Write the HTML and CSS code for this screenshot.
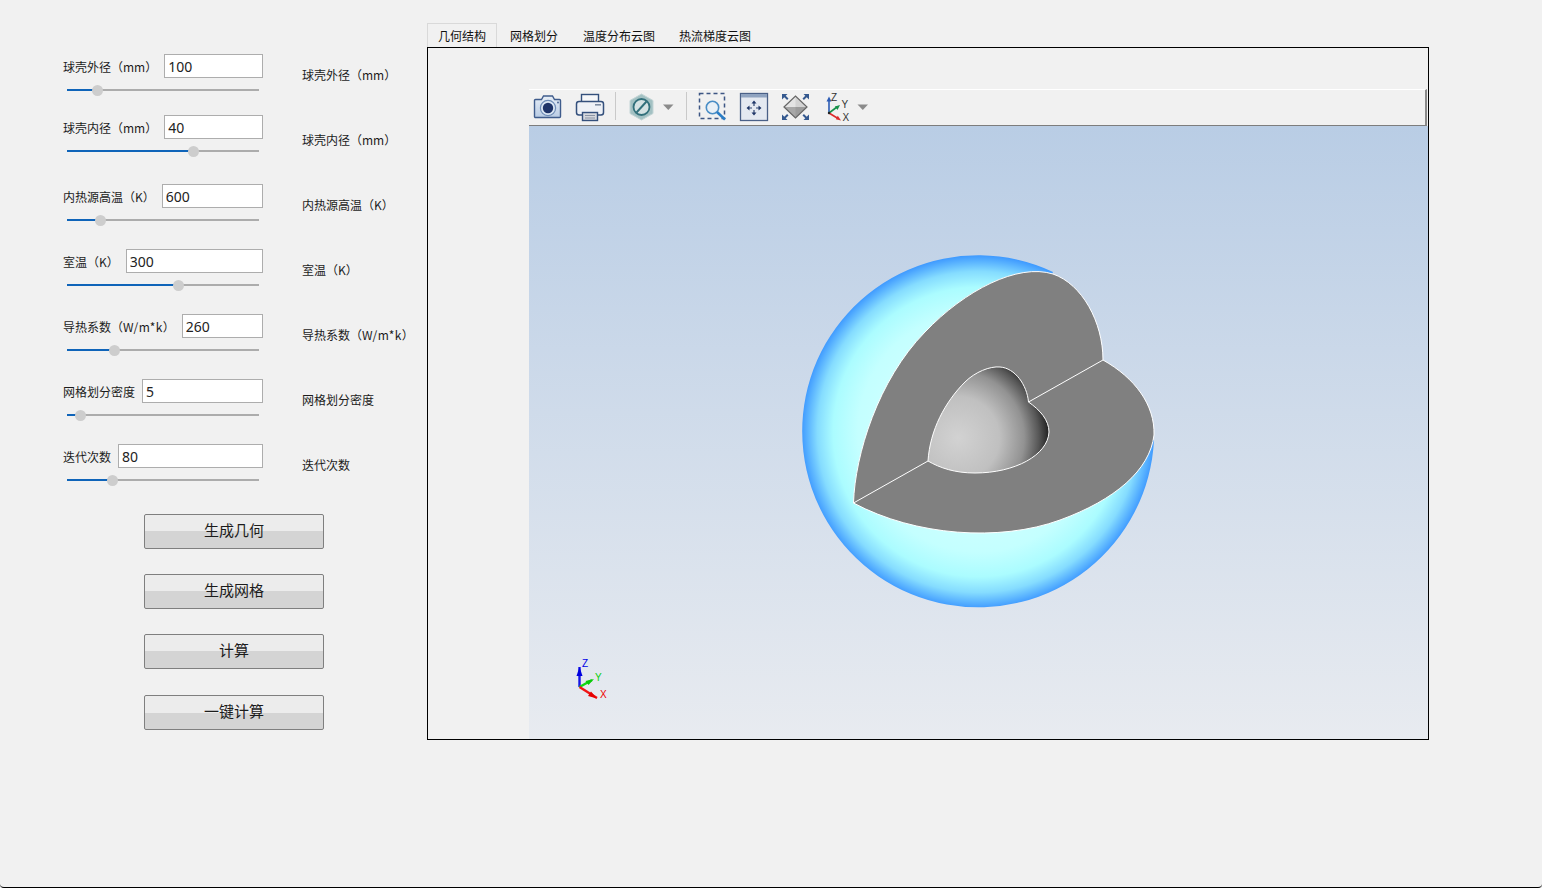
FILE: index.html
```html
<!DOCTYPE html>
<html lang="zh-CN">
<head>
<meta charset="utf-8">
<title>球壳传热计算</title>
<link rel="stylesheet" href="styles.css">
</head>
<body>
<div class="window">
  <aside class="sidebar">
    <div class="params">
      <div class="fields">
        <div class="field field-tight">
          <div class="field-row"><label class="field-label">球壳外径（mm）</label><input class="field-input" value="100"></div>
          <div class="slider"><span class="slider-fill" style="width:30px"></span><span class="slider-thumb"></span><span class="slider-rest"></span></div>
        </div>
        <div class="field field-loose">
          <div class="field-row"><label class="field-label">球壳内径（mm）</label><input class="field-input" value="40"></div>
          <div class="slider"><span class="slider-fill" style="width:126px"></span><span class="slider-thumb"></span><span class="slider-rest"></span></div>
        </div>
        <div class="field">
          <div class="field-row"><label class="field-label">内热源高温（K）</label><input class="field-input" value="600"></div>
          <div class="slider"><span class="slider-fill" style="width:33px"></span><span class="slider-thumb"></span><span class="slider-rest"></span></div>
        </div>
        <div class="field">
          <div class="field-row"><label class="field-label">室温（K）</label><input class="field-input" value="300"></div>
          <div class="slider"><span class="slider-fill" style="width:111px"></span><span class="slider-thumb"></span><span class="slider-rest"></span></div>
        </div>
        <div class="field">
          <div class="field-row"><label class="field-label">导热系数（<span class="unit-wide">W/m*k</span>）</label><input class="field-input" value="260"></div>
          <div class="slider"><span class="slider-fill" style="width:47px"></span><span class="slider-thumb"></span><span class="slider-rest"></span></div>
        </div>
        <div class="field">
          <div class="field-row"><label class="field-label">网格划分密度</label><input class="field-input" value="5"></div>
          <div class="slider"><span class="slider-fill" style="width:13px"></span><span class="slider-thumb"></span><span class="slider-rest"></span></div>
        </div>
        <div class="field">
          <div class="field-row"><label class="field-label">迭代次数</label><input class="field-input" value="80"></div>
          <div class="slider"><span class="slider-fill" style="width:45px"></span><span class="slider-thumb"></span><span class="slider-rest"></span></div>
        </div>
      </div>
      <div class="readouts">
        <div class="readout">球壳外径（mm）</div>
        <div class="readout">球壳内径（mm）</div>
        <div class="readout">内热源高温（K）</div>
        <div class="readout">室温（K）</div>
        <div class="readout">导热系数（<span class="unit-wide">W/m*k</span>）</div>
        <div class="readout">网格划分密度</div>
        <div class="readout">迭代次数</div>
      </div>
    </div>
    <div class="actions">
      <button class="action">生成几何</button>
      <button class="action">生成网格</button>
      <button class="action">计算</button>
      <button class="action action-last">一键计算</button>
    </div>
  </aside>

  <main class="workspace">
    <div class="tabs">
      <div class="tab tab-active">几何结构</div>
      <div class="tab tab-spaced">网格划分</div>
      <div class="tab">温度分布云图</div>
      <div class="tab">热流梯度云图</div>
    </div>
    <div class="frame">
      <div class="viewer">
        <div class="toolbar">
          <svg class="tool tool-first" width="30" height="30" viewBox="0 0 30 30">
            <defs><linearGradient id="camBody" x1="0" y1="0" x2="0" y2="1"><stop offset="0" stop-color="#e6edf6"/><stop offset="1" stop-color="#b9cce4"/></linearGradient></defs>
            <path d="M2.500 7.500h6l2-3.500h9l2 3.500h5a1 1 0 0 1 1 1v16a1 1 0 0 1-1 1h-24a1 1 0 0 1-1-1v-16a1 1 0 0 1 1-1z" fill="url(#camBody)" stroke="#3f5c8c" stroke-width="1.400"/>
            <circle cx="15" cy="16" r="7.600" fill="#dce7f3" stroke="#6f8db6" stroke-width="1.200"/>
            <circle cx="15" cy="16" r="5.200" fill="#1f3468"/>
            <circle cx="25" cy="10.500" r="0.900" fill="#3f5c8c"/>
          </svg>
          <svg class="tool" width="30" height="30" viewBox="0 0 30 30">
            <rect x="6.500" y="2.500" width="17" height="8" fill="#f6f7f9" stroke="#34507c" stroke-width="1.400"/>
            <rect x="1.500" y="9.500" width="27" height="13.500" rx="2.500" fill="#eef1f6" stroke="#34507c" stroke-width="1.500"/>
            <rect x="20" y="12" width="6" height="1.600" fill="#7f8da3"/>
            <rect x="7.500" y="20.500" width="15" height="8" fill="#d5d8dd" stroke="#34507c" stroke-width="1.400"/>
            <path d="M10 23.500h10M10 26h10" stroke="#8a94a5" stroke-width="1"/>
          </svg>
          <span class="tool-sep"></span>
          <svg class="tool-wide" width="30" height="30" viewBox="0 0 30 30">
            <path d="M15.500 2 L27 8.500 V21.500 L15.500 28 L4 21.500 V8.500 Z" fill="#a3c1c3" stroke="#c3d5d6" stroke-width="1"/>
            <circle cx="15.500" cy="15" r="8" fill="#d4e2e3" stroke="#32707b" stroke-width="1.800"/>
            <path d="M10.500 20.500 L20.500 9.500" stroke="#32707b" stroke-width="1.900"/>
          </svg>
          <svg class="tool-caret" width="12" height="30" viewBox="0 0 12 30"><path d="M1 12.500h10.500l-5.200 5.500z" fill="#8b8b8b"/></svg>
          <span class="tool-sep"></span>
          <svg class="tool-wide" width="30" height="30" viewBox="0 0 30 30">
            <rect x="2.500" y="1.500" width="25" height="25" fill="none" stroke="#3d5684" stroke-width="1.500" stroke-dasharray="4 3"/>
            <circle cx="15.500" cy="15.500" r="6.200" fill="#e9f0f7" stroke="#4a8ec6" stroke-width="1.600"/>
            <path d="M20 20 L28 27.500" stroke="#2a7dc6" stroke-width="2.600"/>
          </svg>
          <svg class="tool" width="30" height="30" viewBox="0 0 30 30">
            <rect x="1.500" y="1.500" width="27" height="27" fill="#e4e9f1" stroke="#4a6087" stroke-width="1.300"/>
            <rect x="2" y="2" width="26" height="3.500" fill="#8fa3c0"/>
            <path d="M15 11v3M15 18v3M10 16h3M17 16h3" stroke="#2d4470" stroke-width="1.200"/>
            <path d="M15 8.500l-2.500 3h5zM15 23.500l-2.500-3h5zM7.500 16l3-2.500v5zM22.500 16l-3-2.500v5z" fill="#1f3668"/>
          </svg>
          <svg class="tool" width="30" height="30" viewBox="0 0 30 30">
            <path d="M3 15 L14.500 4 L26 15 Z" fill="#e4e4e4"/>
            <path d="M3 15 L14.500 26 L26 15 Z" fill="#a8a8a8"/>
            <path d="M14.500 4 V26 L26 15 Z" fill="#000" fill-opacity=".07"/>
            <path d="M3 15 L14.500 4 L26 15 L14.500 26 Z" fill="none" stroke="#666" stroke-width="1.200"/>
            <path d="M1 2h5.500l-1.800 1.800 2.800 2.800-1.400 1.400-2.800-2.800L1 7.500zM28 2h-5.500l1.800 1.800-2.800 2.800 1.400 1.400 2.800-2.800L28 7.500zM1 28h5.500l-1.800-1.800 2.800-2.800-1.400-1.400-2.800 2.800L1 22.500zM28 28h-5.500l1.800-1.800-2.800-2.800 1.400-1.400 2.800 2.800L28 22.500z" fill="#35598f"/>
          </svg>
          <svg class="tool" width="30" height="30" viewBox="0 0 30 30">
            <path d="M6 21 V8" stroke="#2c5cb5" stroke-width="1.600"/><path d="M6 4.500 L3.500 9.500 H8.500 Z" fill="#2c5cb5"/>
            <path d="M6 21 L14 15" stroke="#17914a" stroke-width="1.600"/><path d="M17 13 L11.800 14.500 L14.500 18 Z" fill="#17914a"/>
            <path d="M6 21 L15 26.500" stroke="#dd2b2b" stroke-width="1.600"/><path d="M18 28.500 L14.800 23.800 L12.800 27.200 Z" fill="#dd2b2b"/>
            <circle cx="6" cy="21" r="1.200" fill="#222"/>
            <text class="tool-axis" x="8" y="9">Z</text>
            <text class="tool-axis" x="18.500" y="15.500">Y</text>
            <text class="tool-axis" x="19.500" y="28.500">X</text>
          </svg>
          <svg class="tool-caret-last" width="12" height="30" viewBox="0 0 12 30"><path d="M0.500 12.500h10.500l-5.200 5.500z" fill="#8b8b8b"/></svg>
        </div>
        <div class="viewport">
          <svg class="scene" width="899" height="613" viewBox="529 126 899 613">
            <defs>
              <radialGradient id="shell" gradientUnits="userSpaceOnUse" cx="978" cy="432" r="176.500">
                <stop offset="0" stop-color="#e2ffff"/>
                <stop offset=".68" stop-color="#c4ffff"/>
                <stop offset=".82" stop-color="#abfcff"/>
                <stop offset=".91" stop-color="#85dcff"/>
                <stop offset="1" stop-color="#3f9aff"/>
              </radialGradient>
              <radialGradient id="cavity" gradientUnits="userSpaceOnUse" cx="958" cy="438" r="92">
                <stop offset="0" stop-color="#d2d2d2"/>
                <stop offset=".45" stop-color="#c0c0c0"/>
                <stop offset=".72" stop-color="#929292"/>
                <stop offset=".88" stop-color="#565656"/>
                <stop offset="1" stop-color="#1c1c1c"/>
              </radialGradient>
            </defs>
            <path d="M1053 272 A176 176 0 1 0 1154 440 L1000 400 Z" fill="url(#shell)"/>
            <path d="M853.500 503 C855 455 878 380 925 332 C965 290 1018 263 1053 274 C1082 284 1103 322 1103 360 C1135 378 1155 405 1154 435 C1150 470 1115 500 1060 520 C1000 542 915 536 853.500 503 Z" fill="#808080" stroke="#fff" stroke-width="1"/>
            <path d="M928 461 C930 430 945 402 965 382 C975 372 990 366 1000 367 C1015 368 1027 385 1028.500 402 C1040 410 1049 420 1049 432 C1048 455 1015 473 975 473 C955 473 940 468 928 461 Z" fill="url(#cavity)" stroke="#fff" stroke-width="1"/>
            <path d="M853.500 503 L928 461 M1028.500 402 L1103 360" stroke="#fff" stroke-width="1" fill="none"/>
            <path d="M579.500 687 V667" stroke="#1414e6" stroke-width="2.400"/>
            <path d="M579.500 667 L576.500 676 H582.500 Z" fill="#0000e0"/>
            <path d="M579.500 687 L592 680" stroke="#12d812" stroke-width="2.400"/>
            <path d="M594 679 L585.500 681 L588.500 685 Z" fill="#0acb0a"/>
            <path d="M579.500 687 L597 698" stroke="#f01414" stroke-width="2.400"/>
            <path d="M597 698.500 L591 691.500 L588 696 Z" fill="#e60000"/>
            <text class="axis axis-z" x="582" y="667">Z</text>
            <text class="axis axis-y" x="595" y="681">Y</text>
            <text class="axis axis-x" x="600" y="698">X</text>
          </svg>
        </div>
      </div>
    </div>
  </main>
</div>
</body>
</html>
```
FILE: styles.css
```css
* { box-sizing: border-box; }

html, body { margin: 0; padding: 0; }

body {
  background: #f1f1f1;
  font-family: "Noto Sans CJK SC", "Noto Sans", sans-serif;
  font-size: 12px;
  color: #1c1c1c;
  overflow: hidden;
}

.window {
  display: flex;
  width: 1542px;
  height: 888px;
  background: #f1f1f1;
  border-bottom: 1px solid #000;
  border-radius: 0 0 4px 4px;
}

/* left panel */
.sidebar {
  flex: 0 0 427px;
  padding: 54px 0 0 63px;
}

.params {
  display: flex;
  gap: 39px;
}

.fields {
  width: 200px;
  display: flex;
  flex-direction: column;
}

.field { margin-bottom: 23px; }
.field:last-child { margin-bottom: 0; }
.field-tight { margin-bottom: 19px; }
.field-loose { margin-bottom: 27px; }

.field-row {
  display: flex;
  align-items: center;
  gap: 7px;
  height: 24px;
}

.field-label {
  padding-top: 2px;
  white-space: nowrap;
  line-height: 24px;
}

.unit-wide { letter-spacing: .4px; }

.field-input {
  flex: 1;
  min-width: 0;
  height: 24px;
  padding: 1px 3px 0;
  border: 1px solid #adadad;
  border-radius: 0;
  outline: 0;
  background: #fff;
  color: #222;
  font-family: "Noto Sans", sans-serif;
  font-size: 14px;
}

.slider {
  display: flex;
  align-items: flex-start;
  height: 11px;
  margin: 7px 4px 0;
}

.slider-fill, .slider-rest {
  display: block;
  height: 2px;
  margin-top: 4px;
}

.slider-fill { flex: none; background: #0f64b9; }
.slider-rest { flex: 1; background: #acacac; }

.slider-thumb {
  flex: none;
  width: 11px;
  height: 11px;
  margin: 0 -5px;
  border-radius: 50%;
  background: #cdcdcd;
  position: relative;
}

.readouts { padding-top: 11px; }

.readout {
  height: 65px;
  line-height: 20px;
  white-space: nowrap;
}

.actions {
  display: flex;
  flex-direction: column;
  gap: 25px;
  margin: -6px 0 0 81px;
}

.action {
  width: 180px;
  height: 35px;
  padding: 0 0 4px;
  border: 1px solid #7f7f7f;
  border-radius: 2px;
  background: linear-gradient(#ececec 0, #ececec 50%, #d4d4d4 50%, #d4d4d4 100%);
  color: #1c1c1c;
  font-family: "Noto Sans CJK SC", sans-serif;
  font-size: 15px;
  line-height: 29px;
}

.action-last { margin-top: 1px; }

/* right panel */
.workspace {
  width: 1002px;
  padding-top: 23px;
}

.tabs {
  display: flex;
  height: 24px;
}

.tab {
  padding: 0 12px;
  line-height: 25px;
  white-space: nowrap;
  color: #111;
}

.tab-spaced { padding: 0 13px; }

.tab-active {
  padding: 0 10px;
  border: 1px solid #d9d9d9;
  border-bottom: 0;
  line-height: 24px;
  background: #f1f1f1;
}

.frame {
  height: 693px;
  margin-top: 0;
  padding: 41px 0 0 101px;
  border: 1px solid #000;
}

.viewer {
  display: flex;
  flex-direction: column;
  height: 100%;
}

.toolbar {
  display: flex;
  align-items: flex-start;
  flex: 0 0 37px;
  padding: 2px 0 0 4px;
  border-top: 1px solid #fff;
  border-bottom: 1px solid #7d7d7d;
  border-right: 2px solid #8a8a8a;
  margin-right: 1px;
  background: #f1f1f1;
}

.tool { flex: none; margin-left: 12px; }
.tool-first { margin-left: 0; }
.tool-wide { flex: none; }

.tool-sep {
  flex: none;
  width: 1px;
  height: 28px;
  margin: 0 10px;
  background: #c9c9c9;
}

.tool-caret { flex: none; margin: 0 2px 0 6px; }
.tool-caret-last { flex: none; margin-left: 4px; }

.tool-axis {
  font-family: "Liberation Sans", sans-serif;
  font-size: 10px;
  fill: #333;
}

.viewport {
  flex: 1;
  background: linear-gradient(#b9cde5, #e8ebf0);
}

.scene { display: block; }

.axis {
  font-family: "Liberation Sans", sans-serif;
  font-size: 10px;
}

.axis-z { fill: #0000e6; }
.axis-y { fill: #0ccf0c; }
.axis-x { fill: #ee0000; }
```
